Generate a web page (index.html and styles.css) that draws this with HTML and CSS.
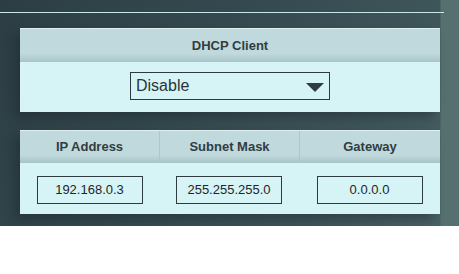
FILE: index.html
```html
<!DOCTYPE html>
<html lang="en">
<head>
  <meta charset="UTF-8">
  <title>DHCP Client</title>
  <link rel="stylesheet" href="styles.css">
</head>
<body>

<div class="page">
  <div class="rule"></div>

  <!-- DHCP -->
  <div class="panel dhcp">
    <div class="head single">DHCP Client</div>
    <div class="body">
      <div class="select">
        <span>Disable</span>
        <svg class="arrow" width="18" height="9" viewBox="0 0 18 9"><polygon points="0,0 18,0 9,9" fill="#2f3b40"/></svg>
      </div>
    </div>
  </div>

  <!-- IP -->
  <div class="panel ip">
    <div class="head cols">
      <div class="col">IP Address</div>
      <div class="col">Subnet Mask</div>
      <div class="col">Gateway</div>
    </div>
    <div class="body cols">
      <div class="col"><div class="field">192.168.0.3</div></div>
      <div class="col"><div class="field">255.255.255.0</div></div>
      <div class="col"><div class="field">0.0.0.0</div></div>
    </div>
  </div>
</div>

</body>
</html>
```

FILE: styles.css
```css
body {
  margin: 0;
  background: white;
  font-family: "Liberation Sans", Arial, sans-serif;
}
.page {
  height: 226px;
  padding-top: 12px;
  box-sizing: border-box;
  background:
    linear-gradient(90deg, rgba(0,0,0,0) 0, rgba(0,0,0,0) 440px, #56706f 441px),
    linear-gradient(120deg, #2c3e44 0%, #34494f 40%, #3e555a 75%, #4b6466 100%);
}
.rule {
  width: 444px;
  height: 1px;
  background: #c9e6ea;
}
.panel {
  width: 420px;
  margin-left: 20px;
  box-shadow: -6px 6px 10px rgba(20,30,34,0.35);
}
.dhcp { margin-top: 15px; }
.ip { margin-top: 18px; }
.head {
  background: linear-gradient(#bfd9dc 0, #bfd9dc 75%, #a9c4c6 100%);
  border-top: 1px solid #dfeeee;
  color: #323d40;
  font-weight: bold;
  font-size: 13px;
}
.head.single {
  height: 33px;
  line-height: 33px;
  text-align: center;
}
.head.cols { height: 32px; }
.head .col {
  line-height: 32px;
  text-align: center;
  border-left: 1px solid #a9c9cc;
}
.head .col:first-child { border-left: none; }
.body { background: #d6f4f6; }
.dhcp .body {
  height: 50px;
  padding-top: 10px;
  box-sizing: border-box;
}
.select {
  width: 200px;
  height: 28px;
  margin-left: 110px;
  box-sizing: border-box;
  border: 1px solid #2d3b40;
  display: flex;
  align-items: center;
  justify-content: space-between;
  padding: 0 4px 0 5px;
  font-size: 16px;
  color: #2a3438;
}
.arrow { margin-right: 1px; margin-top: 2px; }
.cols {
  display: grid;
  grid-template-columns: 139px 140px 141px;
}
.ip .body {
  height: 51px;
  padding-top: 13px;
  box-sizing: border-box;
}
.body .col {
  display: flex;
  justify-content: center;
}
.field {
  width: 106px;
  height: 28px;
  box-sizing: border-box;
  border: 1px solid #2d3b40;
  font-size: 13px;
  line-height: 26px;
  text-align: center;
  color: #1e2528;
}
```
